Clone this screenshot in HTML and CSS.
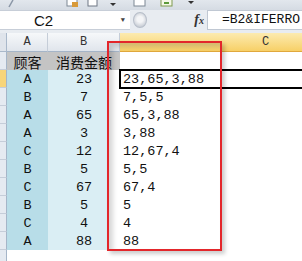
FILE: index.html
```html
<!DOCTYPE html>
<html lang="zh-CN">
<head>
    <meta charset="UTF-8">
    <title>消费金额合并</title>
    <link rel="stylesheet" href="styles.css">
</head>
<body>
    <div class="ribbon">
        <svg class="ribbon-icons" width="302" height="10" viewBox="0 0 302 10">
            <path d="M9 7 L13 0" stroke="#8a96a6" stroke-width="1.5"/>
            <rect x="67" y="-3" width="10" height="9" fill="#fff" stroke="#7d8794"/>
            <rect x="72" y="2" width="6" height="5" fill="#d89a3a"/>
            <rect x="88" y="-3" width="9" height="9" fill="#fff" stroke="#6e7784"/>
            <path d="M110 3 L116 3 L113 6 Z" fill="#333"/>
            <rect x="134" y="-3" width="11" height="9" fill="#fff" stroke="#7d8794"/>
            <rect x="161" y="-3" width="11" height="9" fill="#f4f7e8" stroke="#7e9a4e"/>
            <path d="M164 3 L169 3" stroke="#5c9a3a" stroke-width="2"/>
            <path d="M188 1 L194 1 L191 4 Z" fill="#333"/>
        </svg>
    </div>

    <div class="formula-bar">
        <div class="name-box">
            <span class="ref">C2</span>
            <span class="drop">&#9660;</span>
        </div>
        <div class="grip"></div>
        <div class="fx">f<span class="fx-x">x</span></div>
        <div class="formula">=B2&amp;IFERRO</div>
    </div>

    <div class="sheet">
        <div class="corner"></div>
        <div class="col-head">A</div>
        <div class="col-head">B</div>
        <div class="col-head sel">C</div>

        <div class="row-head"></div>
        <div class="cell title">顾客</div>
        <div class="cell title">消费金额</div>
        <div class="cell c"></div>

        <div class="row-head sel"></div>
        <div class="cell a">A</div>
        <div class="cell b">23</div>
        <div class="cell c active">23,65,3,88</div>

        <div class="row-head"></div>
        <div class="cell a">B</div>
        <div class="cell b">7</div>
        <div class="cell c">7,5,5</div>

        <div class="row-head"></div>
        <div class="cell a">A</div>
        <div class="cell b">65</div>
        <div class="cell c">65,3,88</div>

        <div class="row-head"></div>
        <div class="cell a">A</div>
        <div class="cell b">3</div>
        <div class="cell c">3,88</div>

        <div class="row-head"></div>
        <div class="cell a">C</div>
        <div class="cell b">12</div>
        <div class="cell c">12,67,4</div>

        <div class="row-head"></div>
        <div class="cell a">B</div>
        <div class="cell b">5</div>
        <div class="cell c">5,5</div>

        <div class="row-head"></div>
        <div class="cell a">C</div>
        <div class="cell b">67</div>
        <div class="cell c">67,4</div>

        <div class="row-head"></div>
        <div class="cell a">B</div>
        <div class="cell b">5</div>
        <div class="cell c">5</div>

        <div class="row-head"></div>
        <div class="cell a">C</div>
        <div class="cell b">4</div>
        <div class="cell c">4</div>

        <div class="row-head"></div>
        <div class="cell a">A</div>
        <div class="cell b">88</div>
        <div class="cell c">88</div>

        <div class="row-head"></div>
        <div class="cell"></div>
        <div class="cell"></div>
        <div class="cell"></div>

        <!-- red box drawn over the result column -->
        <div class="mark"></div>
    </div>
</body>
</html>
```

FILE: styles.css
```css
body {
    margin: 0;
    width: 302px;
    height: 261px;
    overflow: hidden;
    background: #fff;
    font-family: "Liberation Mono", monospace;
}

.ribbon {
    height: 10px;
    background: linear-gradient(#e2e7ed, #d5dbe3);
}

.ribbon-icons {
    display: block;
}

.formula-bar {
    display: flex;
    height: 20px;
    padding-bottom: 3px;
    background: #e8ecf1;
}

.name-box {
    width: 130px;
    display: flex;
    align-items: center;
    background: #fff;
    border-top: 1px solid #c7ced8;
    border-bottom: 1px solid #c7ced8;
    box-sizing: border-box;
}

.ref {
    margin-left: 34px;
    font-family: "Liberation Sans", sans-serif;
    font-size: 15px;
    color: #111;
}

.drop {
    margin-left: auto;
    margin-right: 5px;
    font-size: 7px;
    color: #444;
}

.grip {
    width: 14px;
    height: 16px;
    margin: 2px 0 0 3px;
    border-radius: 50%;
    background: radial-gradient(circle at 50% 45%, #f4f5f7 30%, #c9ced6 75%);
    border: 1px solid #b7bec9;
    box-sizing: border-box;
}

.fx {
    margin-left: auto;
    margin-right: 3px;
    font-family: "Liberation Serif", serif;
    font-style: italic;
    font-weight: bold;
    font-size: 14px;
    line-height: 20px;
    color: #333;
}

.fx-x {
    font-size: 10px;
}

.formula {
    width: 95px;
    padding-left: 14px;
    box-sizing: border-box;
    background: #fff;
    border: 1px solid #c0c8d3;
    border-right: none;
    font-size: 13px;
    line-height: 18px;
    color: #111;
    white-space: nowrap;
    overflow: hidden;
}

.sheet {
    position: relative;
    display: grid;
    grid-template-columns: 7px 41px 72px 292px;
    grid-template-rows: 19px;
    grid-auto-rows: 18px;
}

.corner {
    background: #dfe4eb;
    border-right: 1px solid #a9b8ca;
    border-bottom: 1px solid #a9b8ca;
}

.col-head {
    background: linear-gradient(#f6f8fa, #e0e5ec);
    border-right: 1px solid #c5cdd8;
    border-bottom: 1px solid #a5b5c8;
    box-sizing: border-box;
    text-align: center;
    font-size: 12px;
    line-height: 19px;
    color: #333;
}

.col-head.sel {
    background: linear-gradient(#fcebb0, #f7d067);
    border-bottom-color: #e0a83c;
}

.row-head {
    background: #e5eaf1;
    border-right: 1px solid #a5b5c8;
    border-bottom: 1px solid #c5cdd9;
    box-sizing: border-box;
}

.row-head.sel {
    background: #f7d57a;
}

.cell {
    display: flex;
    align-items: flex-end;
    font-size: 13.5px;
    line-height: 16px;
    color: #111;
    white-space: nowrap;
}

.cell.title {
    justify-content: center;
    background: #c4c4c4;
    font-family: "Noto Sans CJK SC", sans-serif;
    font-size: 14px;
}

.cell.a {
    justify-content: center;
    background: #b8dde8;
}

.cell.b {
    justify-content: center;
    background: linear-gradient(#daeef4, #daeef4) 0 0 / 60px 100% no-repeat;
}

.cell.c {
    padding-left: 3px;
}

.cell.active {
    outline: 2px solid #000;
    outline-offset: -1px;
}

.mark {
    position: absolute;
    left: 107px;
    top: 8px;
    width: 115px;
    height: 210px;
    box-sizing: border-box;
    border: 2px solid #e3262b;
    box-shadow: 3px 3px 4px rgba(0, 0, 0, 0.2), inset 4px 4px 5px rgba(0, 0, 0, 0.16);
}
```
